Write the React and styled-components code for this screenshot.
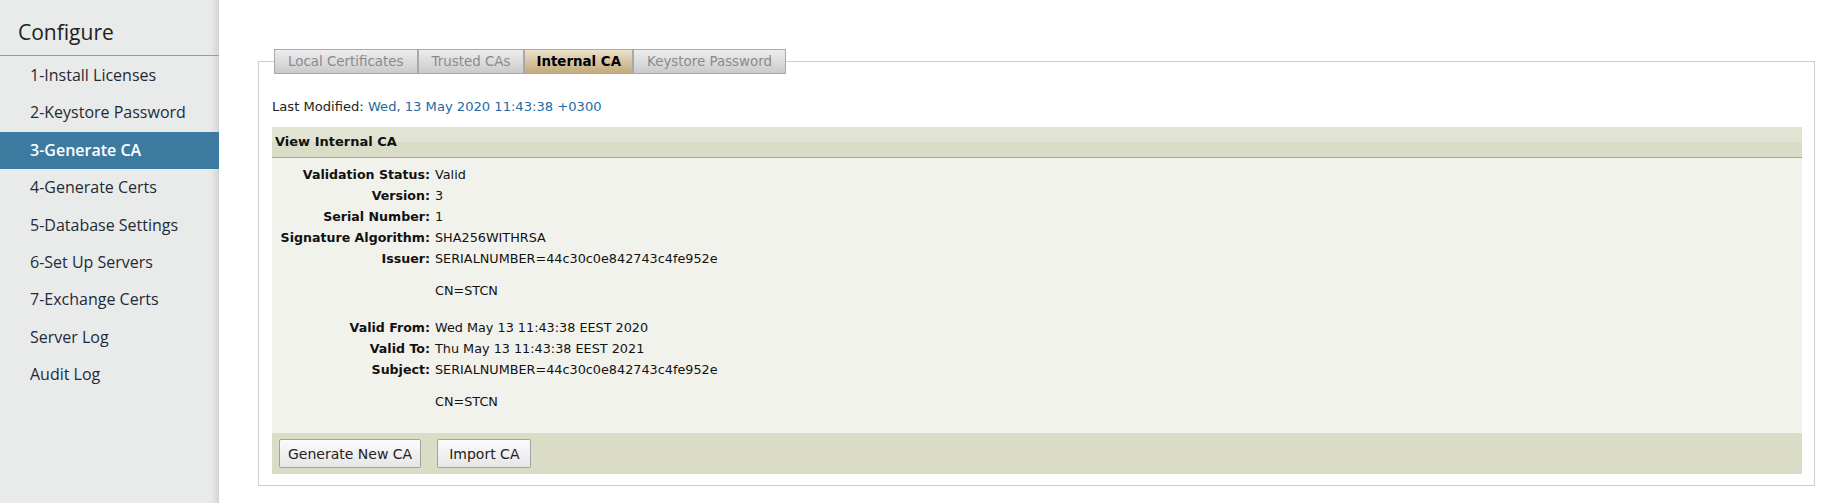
import React from "react";
import styled, { createGlobalStyle } from "styled-components";

const GlobalStyle = createGlobalStyle`
  html, body {
    margin: 0;
    padding: 0;
    background: #ffffff;
  }
  body {
    font-family: "DejaVu Sans", Verdana, sans-serif;
  }
`;

const Page = styled.div`
  display: flex;
  min-height: 503px;
`;

const Sidebar = styled.nav`
  width: 219px;
  flex: none;
  background: #e9eaea;
  box-shadow: inset -10px 0 8px -8px rgba(0, 0, 0, 0.14);
  font-family: "Open Sans", "Noto Sans", sans-serif;
`;

const SideTitle = styled.div`
  height: 55px;
  padding-left: 18px;
  font-size: 21px;
  line-height: 64px;
  color: #1e1e1e;
  border-bottom: 1px solid #9a9a9a;
`;

const SideList = styled.ul`
  list-style: none;
  margin: 0;
  padding: 1px 0 0;
`;

const SideItem = styled.li`
  height: 37.4px;
  line-height: 37.4px;
  padding-left: 30px;
  font-size: 16px;
  color: ${(p) => (p.$active ? "#ffffff" : "#1f2a36")};
  font-weight: ${(p) => (p.$active ? 600 : 400)};
  background: ${(p) => (p.$active ? "#3d7aa0" : "transparent")};
`;

const Main = styled.main`
  flex: 1;
  padding: 49px 18px 0 39px;
`;

const Frame = styled.fieldset`
  margin: 0;
  padding: 0 12px 11px 13px;
  border: 1px solid #cecece;
`;

const Tabs = styled.legend`
  display: flex;
  padding: 0;
  margin-left: 2px;
`;

const Tab = styled.div`
  height: 23px;
  line-height: 23px;
  padding: 0 ${(p) => (p.$active ? 11 : 13)}px;
  font-size: 13.4px;
  border: 1px solid #a9a9a9;
  color: ${(p) => (p.$active ? "#000" : "#8a8a8a")};
  font-weight: ${(p) => (p.$active ? "bold" : "normal")};
  background: ${(p) =>
    p.$active
      ? "linear-gradient(#ece2cc, #d5c29d 55%, #c3aa7c)"
      : "linear-gradient(#ededed, #d9d9d9 60%, #cacaca)"};
`;

const Modified = styled.div`
  margin: 25px 0 12px;
  font-size: 13.1px;
  line-height: 16px;
  color: #222;
  span {
    color: #1b6aa5;
  }
`;

const Panel = styled.section`
  background: #f2f2ec;
`;

const PanelHead = styled.div`
  height: 30px;
  line-height: 30px;
  padding-left: 3px;
  font-size: 13px;
  font-weight: bold;
  color: #111;
  background: linear-gradient(#e1e3d3 50%, #d9dcc6 50%);
  border-bottom: 1px solid #a3aa7d;
`;

const Details = styled.div`
  display: grid;
  grid-template-columns: 163px 1fr;
  padding: 6.5px 0 4.5px;
  font-size: 12.8px;
  line-height: 16px;
  color: #111;
`;

const Label = styled.div`
  padding: 2.5px 5px 2.5px 0;
  text-align: right;
  font-size: 12.6px;
  font-weight: bold;
  white-space: nowrap;
`;

const Value = styled.div`
  padding: 2.5px 0;
`;

const Line = styled.div`
  min-height: 16px;
`;

const ButtonBar = styled.div`
  display: flex;
  gap: 16px;
  padding: 6px 7px;
  background: #dadcc6;
`;

const Button = styled.button`
  height: 29px;
  padding: 0 ${(p) => (p.$wide ? 11 : 8)}px;
  font-family: "DejaVu Sans", Verdana, sans-serif;
  font-size: 14px;
  color: #222;
  border: 1px solid #a2a2a2;
  border-radius: 2px;
  background: linear-gradient(#fbfbfb, #e6e6e6);
`;

const navItems = [
  "1-Install Licenses",
  "2-Keystore Password",
  "3-Generate CA",
  "4-Generate Certs",
  "5-Database Settings",
  "6-Set Up Servers",
  "7-Exchange Certs",
  "Server Log",
  "Audit Log",
];

const tabs = ["Local Certificates", "Trusted CAs", "Internal CA", "Keystore Password"];

const rows = [
  ["Validation Status:", ["Valid"]],
  ["Version:", ["3"]],
  ["Serial Number:", ["1"]],
  ["Signature Algorithm:", ["SHA256WITHRSA"]],
  ["Issuer:", ["SERIALNUMBER=44c30c0e842743c4fe952e", "", "CN=STCN", ""]],
  ["Valid From:", ["Wed May 13 11:43:38 EEST 2020"]],
  ["Valid To:", ["Thu May 13 11:43:38 EEST 2021"]],
  ["Subject:", ["SERIALNUMBER=44c30c0e842743c4fe952e", "", "CN=STCN", ""]],
];

export default function App() {
  return (
    <Page>
      <GlobalStyle />
      <Sidebar>
        <SideTitle>Configure</SideTitle>
        <SideList>
          {navItems.map((n) => (
            <SideItem key={n} $active={n === "3-Generate CA"}>
              {n}
            </SideItem>
          ))}
        </SideList>
      </Sidebar>
      <Main>
        <Frame>
          <Tabs>
            {tabs.map((t) => (
              <Tab key={t} $active={t === "Internal CA"}>
                {t}
              </Tab>
            ))}
          </Tabs>
          <Modified>
            Last Modified: <span>Wed, 13 May 2020 11:43:38 +0300</span>
          </Modified>
          <Panel>
            <PanelHead>View Internal CA</PanelHead>
            <Details>
              {rows.map(([label, lines]) => (
                <React.Fragment key={label}>
                  <Label>{label}</Label>
                  <Value>
                    {lines.map((l, i) => (
                      <Line key={i}>{l}</Line>
                    ))}
                  </Value>
                </React.Fragment>
              ))}
            </Details>
            <ButtonBar>
              <Button>Generate New CA</Button>
              <Button $wide>Import CA</Button>
            </ButtonBar>
          </Panel>
        </Frame>
      </Main>
    </Page>
  );
}
